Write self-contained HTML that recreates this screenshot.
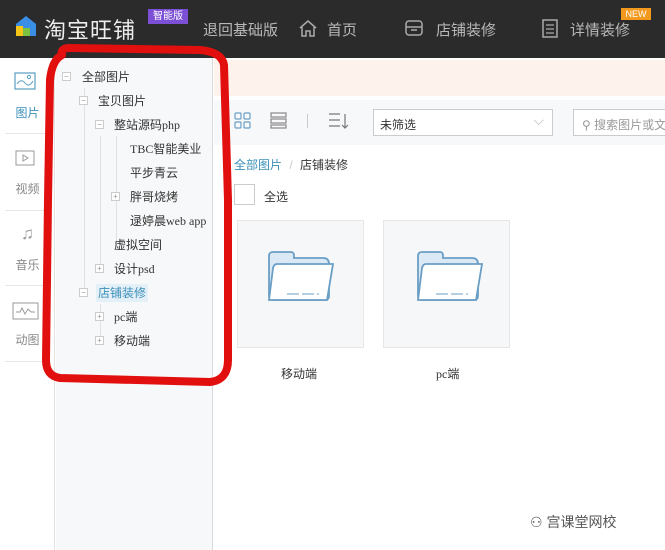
<!DOCTYPE html>
<html><head><meta charset="utf-8"><style>
*{margin:0;padding:0;box-sizing:border-box}
body{width:665px;height:550px;overflow:hidden;background:#fff;font-family:"Liberation Sans","Noto Sans CJK SC",sans-serif;position:relative;font-size:12px;color:#333}
.top{position:absolute;left:0;top:0;width:665px;height:58px;background:#2b2b2b;color:#ccc}
.top .t{position:absolute;top:19px;font-size:15px;color:#b8b8b8}
.ab{position:absolute}
.nav{position:absolute;left:0;top:58px;width:55px;height:492px;background:#fff;border-right:1px solid #e2e2e2}
.nav .l{position:absolute;left:0;width:55px;text-align:center;font-size:12px;color:#888}
.nav .s{position:absolute;left:5px;width:45px;height:1px;background:#e6e6e6}
.tree{position:absolute;left:56px;top:58px;width:157px;height:492px;background:#f7f8fa;border-right:1px solid #d9d9d9}
.r{position:absolute;font-size:12px;color:#333;white-space:nowrap;line-height:14px}
.bx{position:absolute;width:9px;height:9px;border:1px solid #ccc;background:#fff;font-size:8px;line-height:7px;text-align:center;color:#999}
.vl{position:absolute;width:1px;background:#e0e0e0}
.card{position:absolute;top:220px;width:127px;height:128px;background:#f6f7f9;border:1px solid #e6e6e6}
</style></head><body>
<div class="top">
 <svg class="ab" style="left:14px;top:14px" width="24" height="24"><path d="M12 2 L22 10 V22 H2 V10Z" fill="#3a8ee6"/><rect x="2" y="12" width="7" height="10" fill="#f5c518"/><rect x="9" y="14" width="7" height="8" fill="#7bc043"/></svg>
 <div class="ab" style="left:44px;top:13px;font-size:22px;color:#eee;letter-spacing:1px">淘宝旺铺</div>
 <div class="ab" style="left:148px;top:9px;width:40px;height:15px;background:#7b4fd6;color:#fff;font-size:10px;text-align:center;line-height:15px">智能版</div>
 <div class="t" style="left:203px">退回基础版</div>
 <svg class="ab" style="left:298px;top:19px" width="20" height="18"><path d="M2 9 L10 2 L18 9 M4 8 V17 H8 V12 H12 V17 H16 V8" fill="none" stroke="#aaa" stroke-width="1.5"/></svg>
 <div class="t" style="left:327px">首页</div>
 <svg class="ab" style="left:404px;top:19px" width="20" height="18"><rect x="2" y="2" width="16" height="14" rx="3" fill="none" stroke="#aaa" stroke-width="1.5"/><path d="M2 8H18M7 11H13" stroke="#aaa" stroke-width="1.5"/></svg>
 <div class="t" style="left:436px">店铺装修</div>
 <svg class="ab" style="left:541px;top:19px" width="18" height="20"><rect x="2" y="1" width="14" height="17" fill="none" stroke="#aaa" stroke-width="1.5"/><path d="M5 6H13M5 10H13M5 14H13" stroke="#aaa" stroke-width="1.3"/></svg>
 <div class="t" style="left:570px">详情装修</div>
 <div class="ab" style="left:621px;top:8px;width:30px;height:12px;background:#f39a1e;color:#fff;font-size:9px;text-align:center;line-height:12px">NEW</div>
</div>
<div class="nav">
 <svg class="ab" style="left:14px;top:14px" width="22" height="18"><rect x="1" y="1" width="20" height="16" fill="none" stroke="#5a9ec2" stroke-width="1.2"/><path d="M3 12 Q7 6 11 11 T19 9" fill="none" stroke="#5a9ec2"/><circle cx="15" cy="5" r="1.6" fill="none" stroke="#5a9ec2"/></svg>
 <div class="l" style="top:46px;color:#3a8fb8">图片</div>
 <div class="s" style="top:75px"></div>
 <svg class="ab" style="left:15px;top:92px" width="20" height="16"><rect x="1" y="1" width="18" height="14" fill="none" stroke="#999"/><path d="M8 5 L13 8 L8 11Z" fill="none" stroke="#999"/></svg>
 <div class="l" style="top:122px">视频</div>
 <div class="s" style="top:152px"></div>
 <div class="l" style="top:166px;font-size:17px;color:#999">♫</div>
 <div class="l" style="top:198px">音乐</div>
 <div class="s" style="top:227px"></div>
 <svg class="ab" style="left:12px;top:244px" width="27" height="18"><rect x="1" y="1" width="25" height="16" fill="none" stroke="#999"/><path d="M4 10 L8 10 L10 6 L13 12 L16 7 L19 10 L23 10" fill="none" stroke="#999"/></svg>
 <div class="l" style="top:273px">动图</div>
 <div class="s" style="top:303px"></div>
</div>
<div class="tree">
 <div class="vl" style="left:28px;top:30px;height:205px"></div>
 <div class="vl" style="left:44px;top:78px;height:135px"></div>
 <div class="vl" style="left:60px;top:78px;height:110px"></div>
 <div class="vl" style="left:44px;top:246px;height:40px"></div>
</div>
<div class="bx" style="left:62px;top:72px">−</div><div class="r" style="left:82px;top:70px">全部图片</div>
<div class="bx" style="left:79px;top:96px">−</div><div class="r" style="left:98px;top:94px">宝贝图片</div>
<div class="bx" style="left:95px;top:120px">−</div><div class="r" style="left:114px;top:118px">整站源码<span style="font-family:'Liberation Serif'">php</span></div>
<div class="r" style="left:130px;top:142px"><span style="font-family:'Liberation Serif'">TBC</span>智能美业</div>
<div class="r" style="left:130px;top:166px">平步青云</div>
<div class="bx" style="left:111px;top:192px">+</div><div class="r" style="left:130px;top:190px">胖哥烧烤</div>
<div class="r" style="left:130px;top:214px">逯婷晨<span style="font-family:'Liberation Serif'">web app</span></div>
<div class="r" style="left:114px;top:238px">虚拟空间</div>
<div class="bx" style="left:95px;top:264px">+</div><div class="r" style="left:114px;top:262px">设计<span style="font-family:'Liberation Serif'">psd</span></div>
<div class="bx" style="left:79px;top:288px">−</div><div class="r" style="left:96px;top:284px;background:#e4f0f8;color:#3a8fb8;padding:2px 2px">店铺装修</div>
<div class="bx" style="left:95px;top:312px">+</div><div class="r" style="left:114px;top:310px"><span style="font-family:'Liberation Serif'">pc</span>端</div>
<div class="bx" style="left:95px;top:336px">+</div><div class="r" style="left:114px;top:334px">移动端</div>

<div class="ab" style="left:214px;top:60px;width:451px;height:36px;background:#fdf3ec"></div>
<div class="ab" style="left:214px;top:100px;width:451px;height:45px;background:#f7f8fa"></div>
<svg class="ab" style="left:234px;top:112px" width="18" height="18"><g fill="none" stroke="#6a9ec5" stroke-width="1.2"><rect x="1" y="1" width="6" height="6" rx="1"/><rect x="10" y="1" width="6" height="6" rx="1"/><rect x="1" y="10" width="6" height="6" rx="1"/><rect x="10" y="10" width="6" height="6" rx="1"/></g></svg>
<svg class="ab" style="left:270px;top:112px" width="18" height="18"><g fill="none" stroke="#888" stroke-width="1.2"><rect x="1" y="1" width="15" height="4"/><rect x="1" y="7" width="15" height="4"/><rect x="1" y="13" width="15" height="3"/></g></svg>
<div class="ab" style="left:307px;top:114px;width:1px;height:14px;background:#ccc"></div>
<svg class="ab" style="left:328px;top:112px" width="22" height="18"><path d="M1 2H12M1 8H12M1 14H12M17 2V16M14 13L17 16L20 13" fill="none" stroke="#777" stroke-width="1.2"/></svg>
<div class="ab" style="left:373px;top:109px;width:180px;height:27px;border:1px solid #ccc;background:#fff;padding:6px 6px;font-size:12px">未筛选<span style="position:absolute;right:8px;top:2px;color:#bbb;font-size:14px">⌵</span></div>
<div class="ab" style="left:573px;top:109px;width:100px;height:27px;border:1px solid #ccc;background:#fff;padding:6px 8px;font-size:12px;color:#999;white-space:nowrap">⚲ 搜索图片或文</div>
<div class="ab" style="left:234px;top:156px;font-size:12px;color:#3a8fb8">全部图片 <span style="color:#ccc;margin:0 4px">/</span> <span style="color:#333">店铺装修</span></div>
<div class="ab" style="left:234px;top:184px;width:21px;height:21px;border:1px solid #ccc;background:#fff"></div>
<div class="ab" style="left:264px;top:188px;font-size:12px">全选</div>
<div class="card" style="left:237px"></div>
<div class="card" style="left:383px"></div>
<svg class="ab" style="left:267px;top:250px" width="68" height="60"><path d="M2 6 Q2 2 6 2 H24 Q27 2 27 6 V8 H56 Q62 8 62 14 V46 Q62 50 58 50 H6 Q2 50 2 46Z" fill="#dbe9f6" stroke="#6a9ec5" stroke-width="1.8"/><path d="M10 14 H66 L60 50 H2 L6 18 Q7 14 10 14Z" fill="#fff" stroke="#6a9ec5" stroke-width="1.8"/><path d="M20 44 H52" stroke="#6a9ec5" stroke-dasharray="12 3"/></svg>
<svg class="ab" style="left:416px;top:250px" width="68" height="60"><path d="M2 6 Q2 2 6 2 H24 Q27 2 27 6 V8 H56 Q62 8 62 14 V46 Q62 50 58 50 H6 Q2 50 2 46Z" fill="#dbe9f6" stroke="#6a9ec5" stroke-width="1.8"/><path d="M10 14 H66 L60 50 H2 L6 18 Q7 14 10 14Z" fill="#fff" stroke="#6a9ec5" stroke-width="1.8"/><path d="M20 44 H52" stroke="#6a9ec5" stroke-dasharray="12 3"/></svg>
<div class="ab" style="left:281px;top:365px">移动端</div>
<div class="ab" style="left:436px;top:365px"><span style="font-family:'Liberation Serif'">pc</span>端</div>
<div class="ab" style="left:530px;top:512px;font-size:14px;color:#555">⚇ 宫课堂网校</div>
<svg class="ab" style="left:0;top:0" width="665" height="550"><path d="M62 55 Q60 48 70 48 L200 50 Q222 52 224 65 L228 200 L228 360 Q228 380 210 382 L60 378 Q46 376 46 360 L48 200 L50 80 Q52 60 62 55Z" fill="none" stroke="#e20f0f" stroke-width="8" stroke-linejoin="round"/></svg>
</body></html>
